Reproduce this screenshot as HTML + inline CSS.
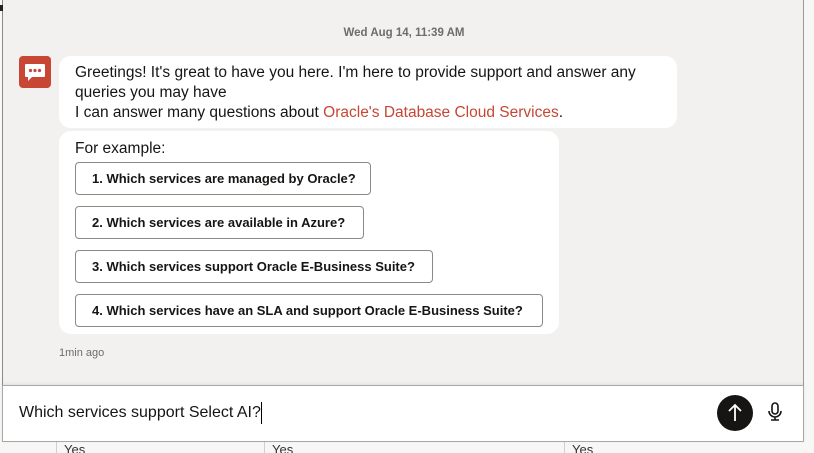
<!DOCTYPE html>
<html><head><style>
*{margin:0;padding:0;box-sizing:border-box}
html,body{width:814px;height:453px;overflow:hidden}
body{background:#f7f7f6;font-family:"Liberation Sans",sans-serif;position:relative;color:#161513}
.panel{position:absolute;left:2px;top:0;width:802px;height:442px;background:#f2f1ef;border-left:1px solid #8a8a8a;border-right:1px solid #9a9a9a}
.date{position:absolute;top:27px;left:0;width:802px;text-align:center;font-size:11.5px;font-weight:bold;color:#6f6c69}
.av{position:absolute;left:19px;top:56px;width:32px;height:32px;background:#c74634;border-radius:4px}
.b{position:absolute;background:#fff;border-radius:12px}
.b1{left:59px;top:56px;width:618px;height:72px;padding:7px 16px;font-size:15.5px;line-height:20px}
.b2{left:59px;top:131px;width:500px;height:203px;padding:8px 16px;font-size:15.5px;line-height:20px}
.lnk{color:#c74634}
.btn{position:absolute;left:16px;height:33px;border:1px solid #8c8985;border-radius:4px;font-size:13px;font-weight:bold;line-height:31px;padding:0 16px;white-space:nowrap}
.ago{position:absolute;left:59px;top:347px;font-size:11px;color:#6f6c69}
.inp{position:absolute;left:2px;top:385px;width:802px;height:57px;background:#fff;border:1px solid #a8a8a8;box-shadow:0 -1px 3px rgba(0,0,0,.08)}
.inp span{position:absolute;left:16px;top:18px;font-size:16px}
.send{position:absolute;left:714px;top:9px;width:36px;height:36px;border-radius:50%;background:#161513}
.tbl{position:absolute;top:442px;left:0;width:814px;height:11px}
.tbl div{position:absolute;top:0;height:11px;border-left:1px solid #d0d0d0;font-size:13px;padding-left:7px;line-height:16px;color:#333}
</style></head><body>
<div class="tbl"><div style="left:56px">Yes</div><div style="left:264px">Yes</div><div style="left:564px">Yes</div></div>
<div class="panel">
<div class="date">Wed Aug 14, 11:39 AM</div>
</div>
<div style="position:absolute;left:0;top:5px;width:3px;height:6px;background:#222"></div>
<div class="av"><svg width="32" height="32" viewBox="0 0 32 32"><path d="M7 8h18a1 1 0 0 1 1 1v11a1 1 0 0 1-1 1H13l-4 4v-4H7a1 1 0 0 1-1-1V9a1 1 0 0 1 1-1z" fill="#fff"/><circle cx="11.5" cy="14.5" r="1.6" fill="#c74634"/><circle cx="16" cy="14.5" r="1.6" fill="#c74634"/><circle cx="20.5" cy="14.5" r="1.6" fill="#c74634"/></svg></div>
<div class="b b1">Greetings! It's great to have you here. I'm here to provide support and answer any queries you may have<br>I can answer many questions about <span class="lnk">Oracle's Database Cloud Services</span>.</div>
<div class="b b2">For example:
<div class="btn" style="top:31px;width:296px">1. Which services are managed by Oracle?</div>
<div class="btn" style="top:75px;width:289px">2. Which services are available in Azure?</div>
<div class="btn" style="top:119px;width:358px">3. Which services support Oracle E-Business Suite?</div>
<div class="btn" style="top:163px;width:468px">4. Which services have an SLA and support Oracle E-Business Suite?</div>
</div>
<div class="ago">1min ago</div>
<div class="inp"><span>Which services support Select AI?</span><span style="left:258px;top:16px;width:1px;height:22px;background:#000"></span>
<div class="send"><svg width="36" height="36" viewBox="0 0 36 36"><path d="M18 26V10M12 16l6-6 6 6" stroke="#fff" stroke-width="1.8" fill="none"/></svg></div>
<svg style="position:absolute;left:762px;top:15px" width="20" height="22" viewBox="0 0 20 22"><rect x="7" y="2" width="6" height="11" rx="3" fill="none" stroke="#161513" stroke-width="1.6"/><path d="M4 10a6 6 0 0 0 12 0M10 16v3M6 19h8" fill="none" stroke="#161513" stroke-width="1.6"/></svg>
</div>
</body></html>
